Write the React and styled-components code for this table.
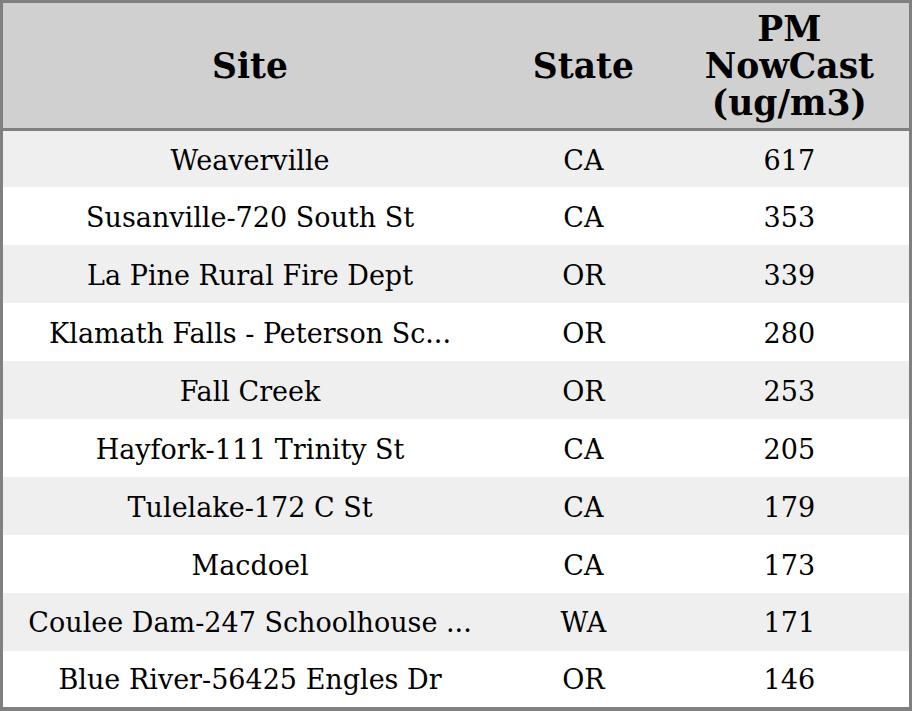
import React from "react";
import styled, { createGlobalStyle } from "styled-components";

const GlobalStyle = createGlobalStyle`
  html, body {
    margin: 0;
    padding: 0;
    background: #ffffff;
  }
  body {
    font-family: "DejaVu Serif", "Liberation Serif", serif;
  }
`;

const Table = styled.table`
  width: 912px;
  height: 711px;
  border-collapse: collapse;
  table-layout: fixed;
  border: 3px solid #808080;
  border-bottom-width: 4px;
  color: #000000;
`;

const HeadRow = styled.tr`
  height: 128px;
  background: #d0d0d0;
  border-bottom: 3px solid #808080;
`;

const HeadCell = styled.th`
  font-size: 34.5px;
  font-weight: bold;
  line-height: 37px;
  text-align: center;
  vertical-align: middle;
  padding: 1px 4px 0;
`;

const Row = styled.tr`
  height: 57.7px;
  background: ${(props) => (props.$striped ? "#efefef" : "#ffffff")};
`;

const Cell = styled.td`
  font-size: 27px;
  text-align: center;
  vertical-align: middle;
  padding: 2px 4px 0;
  white-space: nowrap;
`;

const rows = [
  ["Weaverville", "CA", 617],
  ["Susanville-720 South St", "CA", 353],
  ["La Pine Rural Fire Dept", "OR", 339],
  ["Klamath Falls - Peterson Sc...", "OR", 280],
  ["Fall Creek", "OR", 253],
  ["Hayfork-111 Trinity St", "CA", 205],
  ["Tulelake-172 C St", "CA", 179],
  ["Macdoel", "CA", 173],
  ["Coulee Dam-247 Schoolhouse ...", "WA", 171],
  ["Blue River-56425 Engles Dr", "OR", 146],
];

export default function App() {
  return (
    <>
      <GlobalStyle />
      <Table>
        <colgroup>
          <col style={{ width: 494 }} />
          <col style={{ width: 172 }} />
          <col style={{ width: 240 }} />
        </colgroup>
        <thead>
          <HeadRow>
            <HeadCell>Site</HeadCell>
            <HeadCell>State</HeadCell>
            <HeadCell>
              PM
              <br />
              NowCast
              <br />
              (ug/m3)
            </HeadCell>
          </HeadRow>
        </thead>
        <tbody>
          {rows.map(([site, state, value], i) => (
            <Row key={site} $striped={i % 2 === 0}>
              <Cell>{site}</Cell>
              <Cell>{state}</Cell>
              <Cell>{value}</Cell>
            </Row>
          ))}
        </tbody>
      </Table>
    </>
  );
}
